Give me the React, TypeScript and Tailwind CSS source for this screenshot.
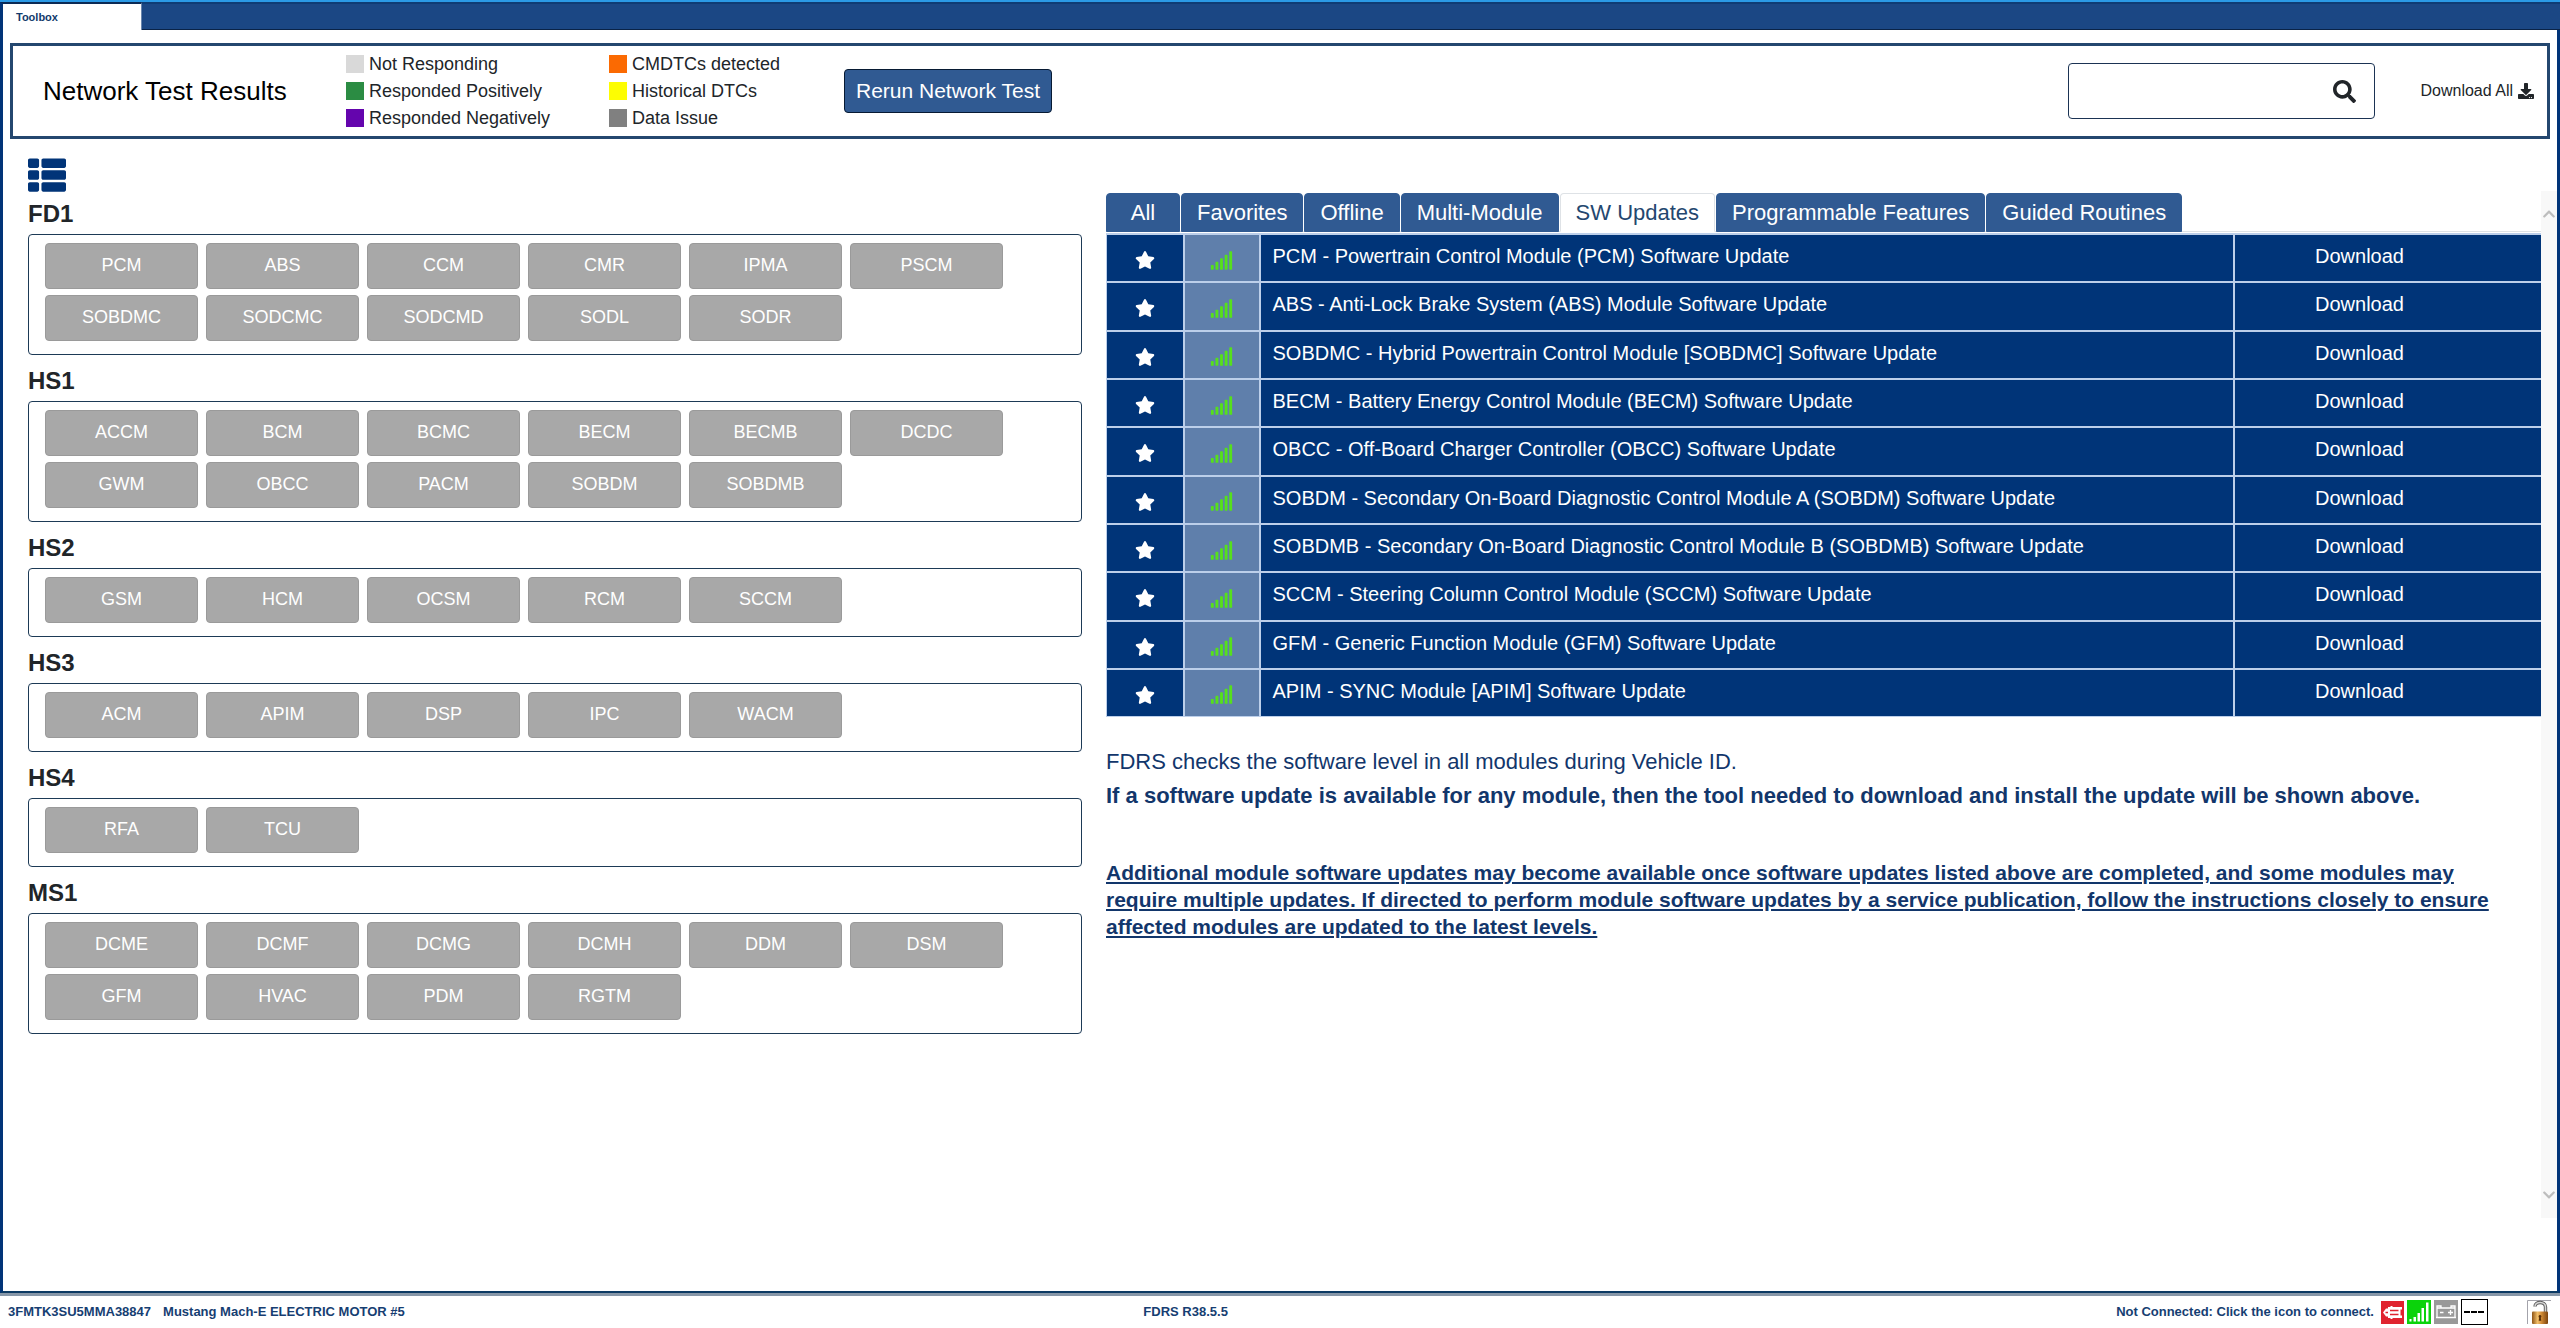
import { FaChevronDown, FaChevronUp, FaDownload, FaSearch, FaSignal, FaStar, FaThList } from "react-icons/fa";
import clsx from "clsx";

interface LegendItem {
  label: string;
  color: string;
}

interface Network {
  name: string;
  modules: string[];
}

const legend: LegendItem[] = [
  { label: "Not Responding", color: "bg-[#d9d9d9]" },
  { label: "Responded Positively", color: "bg-[#2b8c43]" },
  { label: "Responded Negatively", color: "bg-[#6405ad]" },
  { label: "CMDTCs detected", color: "bg-[#fb6a02]" },
  { label: "Historical DTCs", color: "bg-[#fdfd02]" },
  { label: "Data Issue", color: "bg-[#808080]" },
];

const networks: Network[] = [
  {
    name: "FD1",
    modules: ["PCM", "ABS", "CCM", "CMR", "IPMA", "PSCM", "SOBDMC", "SODCMC", "SODCMD", "SODL", "SODR"],
  },
  {
    name: "HS1",
    modules: ["ACCM", "BCM", "BCMC", "BECM", "BECMB", "DCDC", "GWM", "OBCC", "PACM", "SOBDM", "SOBDMB"],
  },
  { name: "HS2", modules: ["GSM", "HCM", "OCSM", "RCM", "SCCM"] },
  { name: "HS3", modules: ["ACM", "APIM", "DSP", "IPC", "WACM"] },
  { name: "HS4", modules: ["RFA", "TCU"] },
  {
    name: "MS1",
    modules: ["DCME", "DCMF", "DCMG", "DCMH", "DDM", "DSM", "GFM", "HVAC", "PDM", "RGTM"],
  },
];

const tabs = [
  "All",
  "Favorites",
  "Offline",
  "Multi-Module",
  "SW Updates",
  "Programmable Features",
  "Guided Routines",
];

const updates = [
  "PCM - Powertrain Control Module (PCM) Software Update",
  "ABS - Anti-Lock Brake System (ABS) Module Software Update",
  "SOBDMC - Hybrid Powertrain Control Module [SOBDMC] Software Update",
  "BECM - Battery Energy Control Module (BECM) Software Update",
  "OBCC - Off-Board Charger Controller (OBCC) Software Update",
  "SOBDM - Secondary On-Board Diagnostic Control Module A (SOBDM) Software Update",
  "SOBDMB - Secondary On-Board Diagnostic Control Module B (SOBDMB) Software Update",
  "SCCM - Steering Column Control Module (SCCM) Software Update",
  "GFM - Generic Function Module (GFM) Software Update",
  "APIM - SYNC Module [APIM] Software Update",
];

function TitleBar() {
  return (
    <div className="flex h-[30px] shrink-0 border-t-2 border-b border-t-[#2b9ae6] border-b-[#0a2347] bg-[#1b4784]">
      <div className="-mb-px flex w-[142px] items-center border-t-2 border-r border-l-3 border-t-[#0b2a55] border-r-[#6a86ad] border-l-[#013478] bg-white pl-[13px] text-[11px] font-bold text-[#123a6b]">
        Toolbox
      </div>
      <div className="flex-1 border-t-2 border-[#0f3c74]" />
    </div>
  );
}

function Header() {
  return (
    <header className="mx-[7px] mt-[13px] flex h-24 items-center border-3 border-[#24476f] pr-[13px] pl-[30px]">
      <h1 className="w-[303px] text-[26px] text-black">Network Test Results</h1>
      <ul className="grid grid-flow-col grid-cols-[263px_235px] grid-rows-3 text-lg leading-[27px] text-[#212529]">
        {legend.map((item) => (
          <li key={item.label} className="flex items-center gap-[5px]">
            <span className={clsx("size-[18px]", item.color)} />
            {item.label}
          </li>
        ))}
      </ul>
      <button
        type="button"
        className="h-11 w-52 rounded-sm border border-[#071a33] bg-[#305a92] text-[21px] text-white"
      >
        Rerun Network Test
      </button>
      <form className="ml-auto flex h-14 w-[307px] items-center rounded-sm border border-[#1b3354] pr-[18px]">
        <input type="text" aria-label="Search" className="h-full min-w-0 flex-1 px-3 text-xl outline-none" />
        <button type="button" aria-label="Search" className="text-[23px] text-[#212529]">
          <FaSearch />
        </button>
      </form>
      <a href="#" className="ml-[46px] flex items-center gap-[5px] text-base text-[#212529]">
        Download All
        <FaDownload />
      </a>
    </header>
  );
}

function NetworkGroup({ network }: { network: Network }) {
  return (
    <section>
      <h2 className="h-[46px] pt-[7px] text-2xl leading-[38px] font-bold text-[#212529]">{network.name}</h2>
      <div className="flex flex-wrap gap-x-2 gap-y-[6px] rounded-sm border border-[#1d3a56] px-4 pt-2 pb-[13px]">
        {network.modules.map((module) => (
          <button
            key={module}
            type="button"
            className="h-[46px] w-[153px] rounded-sm border border-[#9a9a9a] bg-[#a8a8a8] pb-[3px] text-lg text-white"
          >
            {module}
          </button>
        ))}
      </div>
    </section>
  );
}

function Tabs() {
  return (
    <nav role="tablist" className="flex h-[39px] gap-px border-b border-[#dee2e6] text-[22px] leading-none">
      {tabs.map((tab) => {
        const active = tab === "SW Updates";
        return (
          <button
            key={tab}
            type="button"
            role="tab"
            aria-selected={active}
            className={clsx(
              "-mb-px min-w-[74px] rounded-t-sm border px-[15px]",
              active
                ? "border-[#dee2e6] border-b-white bg-white text-[#24476f]"
                : "border-[#305a92] bg-[#305a92] text-white"
            )}
          >
            {tab}
          </button>
        );
      })}
    </nav>
  );
}

function UpdatesTable() {
  return (
    <table className="mt-px h-[484px] w-full table-fixed border-collapse bg-[#003478] text-xl text-white">
      <colgroup>
        <col className="w-[77px]" />
        <col className="w-[76px]" />
        <col />
        <col className="w-[307px]" />
      </colgroup>
      <tbody>
        {updates.map((name) => (
          <tr key={name} className="border-y-2 border-[#bccfea] last:border-b">
            <td className="border-r-2 border-l border-[#bccfea] pt-1">
              <button type="button" aria-label="Favorite" className="mx-auto block text-xl">
                <FaStar />
              </button>
            </td>
            <td className="border-r-2 border-[#bccfea] bg-[#5f7fab] pt-1">
              <FaSignal className="mx-auto text-[23px] text-[#56e01c]" />
            </td>
            <td className="border-r-2 border-[#bccfea] pb-1 pl-3">{name}</td>
            <td className="pr-[57px] pb-1 text-center">
              <button type="button">Download</button>
            </td>
          </tr>
        ))}
      </tbody>
    </table>
  );
}

function Notes() {
  return (
    <div className="mt-7 text-[22px] leading-[34px] text-[#12366b]">
      <p>FDRS checks the software level in all modules during Vehicle ID.</p>
      <p className="font-bold">
        If a software update is available for any module, then the tool needed to download and install the
        update will be shown above.
      </p>
      <p className="mt-[46px] pr-8 text-[21px] leading-[27px] font-bold underline">
        Additional module software updates may become available once software updates listed above are
        completed, and some modules may require multiple updates. If directed to perform module software
        updates by a service publication, follow the instructions closely to ensure affected modules are
        updated to the latest levels.
      </p>
    </div>
  );
}

function ConnectorIcon() {
  return (
    <svg viewBox="0 0 23 23" className="size-[23px] bg-[#e0242f]">
      <path
        d="M2 11.500L5 7.500h2V6h2.500V5h2v1H21v2.500h-1.500v6H21V17h-9.500v1h-2v-1H7v-1.500H5z"
        fill="#fff"
      />
      <path d="M9 9.500h8.500M9 13.500h8.500M4.500 11.500h2.500" stroke="#e0242f" strokeWidth="1.400" />
    </svg>
  );
}

function SignalIcon() {
  return (
    <svg viewBox="0 0 24 24" className="size-6 bg-[#0bd30b]" fill="#fff">
      <rect x="2.5" y="19" width="2" height="2.5" />
      <rect x="6.5" y="17" width="2.5" height="4.5" />
      <rect x="10.5" y="13" width="2.5" height="8.5" />
      <rect x="14.5" y="8" width="2.5" height="13.5" />
      <rect x="19" y="2.5" width="2.5" height="19" />
    </svg>
  );
}

function BatteryIcon() {
  return (
    <svg viewBox="0 0 24 24" className="size-6 bg-[#999]" fill="none" stroke="#fff" strokeWidth="1.300">
      <path d="M2 17.500h20M3 17.500v-9.500h18v9.500M3 8v-2h4v2M17 8v-2h4v2M6 12.500h3.500M14 12.500h5M16.500 10v5" />
    </svg>
  );
}

function LockIcon() {
  return (
    <svg viewBox="0 0 24 25" className="h-[25px] w-6">
      <defs>
        <linearGradient id="brass" x1="0" x2="1" y1="0" y2="0">
          <stop offset="0" stopColor="#8d5416" />
          <stop offset="0.35" stopColor="#f3c06a" />
          <stop offset="0.6" stopColor="#d08a35" />
          <stop offset="1" stopColor="#7a430d" />
        </linearGradient>
      </defs>
      <path d="M0.5 24V0.5H24" fill="none" stroke="#a3a3ab" />
      <path d="M8 6.500C8 1 18.500 1 18.500 7v5" fill="none" stroke="#5c5c5c" strokeWidth="3.400" />
      <path d="M8 6.500C8 1 18.500 1 18.500 7v5" fill="none" stroke="#d5d5d5" strokeWidth="1.500" />
      <rect x="5" y="11.500" width="16" height="12.500" rx="1" fill="url(#brass)" />
      <path d="M13 15a1.500 1.500 0 0 1 .8 2.700l.5 3h-2.600l.5-3A1.500 1.500 0 0 1 13 15z" fill="#5a2f06" />
    </svg>
  );
}

function StatusBar() {
  return (
    <footer className="grid h-8 shrink-0 grid-cols-3 items-center text-[13px] font-bold text-[#163e72]">
      <div className="flex gap-3 pl-2">
        <span>3FMTK3SU5MMA38847</span>
        <span>Mustang Mach-E ELECTRIC MOTOR #5</span>
      </div>
      <div className="pl-[290px]">FDRS R38.5.5</div>
      <div className="flex items-center justify-end gap-[3px] pr-[9px]">
        <span className="pr-1">Not Connected: Click the icon to connect.</span>
        <button type="button" aria-label="Connection">
          <ConnectorIcon />
        </button>
        <SignalIcon />
        <BatteryIcon />
        <span className="flex h-[26px] w-[27px] items-center justify-center gap-px border border-black bg-white">
          <i className="h-[2px] w-1.5 bg-black" />
          <i className="h-[2px] w-1.5 bg-black" />
          <i className="h-[2px] w-1.5 bg-black" />
        </span>
        <button type="button" aria-label="Unlock" className="ml-9">
          <LockIcon />
        </button>
      </div>
    </footer>
  );
}

export default function App() {
  return (
    <div className="flex min-h-screen flex-col bg-white font-['Liberation_Sans',Arial,sans-serif]">
      <TitleBar />
      <main className="flex flex-1 flex-col border-x-3 border-b-2 border-x-[#013478] border-b-[#0c3a63]">
        <Header />
        <div className="flex flex-1 pb-[73px]">
          <div className="grid flex-1 grid-cols-[1054fr_1435fr] gap-6 pl-[25px]">
            <div className="pt-[17px]">
              <button type="button" aria-label="List view" className="block text-[38px] text-[#013478]">
                <FaThList />
              </button>
              <div className="-mt-1.5">
                {networks.map((network) => (
                  <NetworkGroup key={network.name} network={network} />
                ))}
              </div>
            </div>
            <div className="pt-[54px]">
              <Tabs />
              <UpdatesTable />
              <Notes />
            </div>
          </div>
          <div className="mt-[52px] flex w-4 flex-col items-center justify-between bg-[#f8f8f8] py-4 text-sm text-[#bdbdbd]">
            <FaChevronUp />
            <FaChevronDown />
          </div>
        </div>
      </main>
      <div className="h-[3px] shrink-0 bg-[#8797a8]" />
      <StatusBar />
    </div>
  );
}
